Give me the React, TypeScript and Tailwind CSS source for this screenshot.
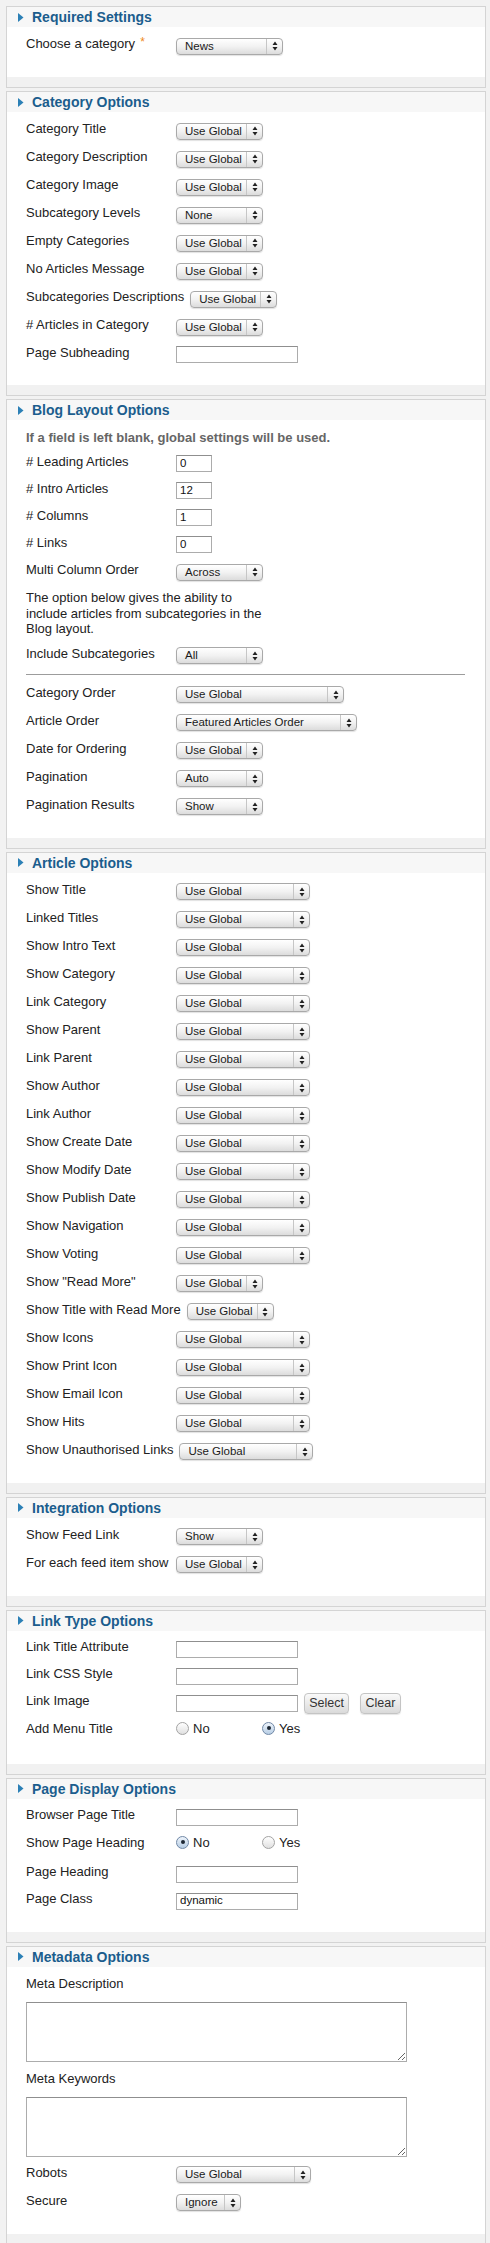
import type { ReactNode } from 'react'

const SHORT = 'w-[87px]'
const LONG = 'w-[134px]'

function Select({ value, w }: { value: string; w: string }) {
  return (
    <div
      className={`${w} h-[17px] flex items-stretch rounded-[4px] border border-[#a9a9a9] bg-linear-to-b from-white via-[#f2f2f2] to-[#dcdcdc] shadow-[0_1px_1px_rgba(0,0,0,0.12)]`}
    >
      <span className="flex-1 pl-[8px] text-[11.5px] leading-[15px] text-[#1a1a1a] whitespace-nowrap overflow-hidden">
        {value}
      </span>
      <span className="w-[16px] border-l border-[#c6c6c6] flex items-center justify-center">
        <svg width="6" height="10" viewBox="0 0 6 10">
          <path d="M0.5 4 L3 0.5 L5.5 4 Z M0.5 6 L3 9.5 L5.5 6 Z" fill="#222" />
        </svg>
      </span>
    </div>
  )
}

function TextInput({ value = '', w = 'w-[122px]' }: { value?: string; w?: string }) {
  return (
    <input
      readOnly
      defaultValue={value}
      className={`${w} h-[17px] border border-[#acacac] border-t-[#8f8f8f] bg-white px-[3px] text-[11.5px] text-[#111] outline-none`}
    />
  )
}

function Label({ children, req }: { children: ReactNode; req?: boolean }) {
  return (
    <label className="min-w-[144px] mr-[6px] mb-[4px] text-[13px] leading-[16px] text-[#222] whitespace-nowrap">
      {children}
      {req && <span className="ml-[5px] align-top text-[12px] leading-[12px] text-[#ef8a21]">*</span>}
    </label>
  )
}

function SelectRow({ label, value, w = SHORT, req }: { label: string; value: string; w?: string; req?: boolean }) {
  return (
    <div className="h-[28px] flex items-center">
      <Label req={req}>{label}</Label>
      <Select value={value} w={w} />
    </div>
  )
}

function InputRow({ label, value, w, children }: { label: string; value?: string; w?: string; children?: ReactNode }) {
  return (
    <div className="h-[27px] flex items-center">
      <Label>{label}</Label>
      <TextInput value={value} w={w} />
      {children}
    </div>
  )
}

function Radio({ label, checked }: { label: string; checked?: boolean }) {
  return (
    <span className="w-[86px] flex items-center gap-[4px] text-[13px] leading-[13px] text-[#222]">
      <span
        className={`w-[13px] h-[13px] rounded-full border flex items-center justify-center ${
          checked
            ? 'border-[#7088a6] bg-linear-to-b from-[#eef4fb] to-[#b7cde4]'
            : 'border-[#a3a3a3] bg-linear-to-b from-white to-[#e0e0e0]'
        }`}
      >
        {checked && <span className="w-[4px] h-[4px] rounded-full bg-[#1d2733]" />}
      </span>
      {label}
    </span>
  )
}

function RadioRow({ label, yes }: { label: string; yes: boolean }) {
  return (
    <div className="h-[30px] pt-[5px] flex items-start">
      <label className="min-w-[144px] mr-[6px] text-[13px] leading-[13px] text-[#222] whitespace-nowrap">{label}</label>
      <Radio label="No" checked={!yes} />
      <Radio label="Yes" checked={yes} />
    </div>
  )
}

function Button({ children, w }: { children: ReactNode; w: string }) {
  return (
    <button
      className={`${w} h-[21px] rounded-[4px] border border-[#c4c4c4] bg-linear-to-b from-[#fafafa] to-[#dadada] text-[12.5px] text-[#333] shadow-[0_1px_1px_rgba(0,0,0,0.1)]`}
    >
      {children}
    </button>
  )
}

function Panel({ title, children }: { title: string; children: ReactNode }) {
  return (
    <section className="ml-[6px] w-[480px] mb-[3px] border border-[#d4d4d4] bg-[#f1f1f1]">
      <div className="h-[20px] bg-[#f7f7f7] flex items-center">
        <svg className="ml-[11px]" width="6" height="9" viewBox="0 0 6 9">
          <path d="M0 0 L5.5 4.5 L0 9 Z" fill="#2c80b6" />
        </svg>
        <h3 className="ml-[8px] text-[14px] leading-[20px] font-bold text-[#1b5d8d]">{title}</h3>
      </div>
      <div className="bg-white pl-[19px] pt-[5px] pb-[17px]">{children}</div>
      <div className="h-[10px]" />
    </section>
  )
}

const CATEGORY: [string, string][] = [
  ['Category Title', 'Use Global'],
  ['Category Description', 'Use Global'],
  ['Category Image', 'Use Global'],
  ['Subcategory Levels', 'None'],
  ['Empty Categories', 'Use Global'],
  ['No Articles Message', 'Use Global'],
  ['Subcategories Descriptions', 'Use Global'],
  ['# Articles in Category', 'Use Global'],
]

const ARTICLE: [string, string][] = [
  ['Show Title', LONG],
  ['Linked Titles', LONG],
  ['Show Intro Text', LONG],
  ['Show Category', LONG],
  ['Link Category', LONG],
  ['Show Parent', LONG],
  ['Link Parent', LONG],
  ['Show Author', LONG],
  ['Link Author', LONG],
  ['Show Create Date', LONG],
  ['Show Modify Date', LONG],
  ['Show Publish Date', LONG],
  ['Show Navigation', LONG],
  ['Show Voting', LONG],
  ['Show "Read More"', SHORT],
  ['Show Title with Read More', SHORT],
  ['Show Icons', LONG],
  ['Show Print Icon', LONG],
  ['Show Email Icon', LONG],
  ['Show Hits', LONG],
  ['Show Unauthorised Links', LONG],
]

export default function App() {
  return (
    <div className="h-[2243px] overflow-hidden bg-[#f2f2f2] pt-[6px] font-['Liberation_Sans',Arial,sans-serif]">
      <Panel title="Required Settings">
        <SelectRow label="Choose a category" value="News" w="w-[107px]" req />
      </Panel>

      <Panel title="Category Options">
        {CATEGORY.map(([l, v]) => (
          <SelectRow key={l} label={l} value={v} />
        ))}
        <InputRow label="Page Subheading" />
      </Panel>

      <Panel title="Blog Layout Options">
        <div className="h-[25px] flex items-center text-[13px] font-bold text-[#666]">
          If a field is left blank, global settings will be used.
        </div>
        <InputRow label="# Leading Articles" value="0" w="w-[36px]" />
        <InputRow label="# Intro Articles" value="12" w="w-[36px]" />
        <InputRow label="# Columns" value="1" w="w-[36px]" />
        <InputRow label="# Links" value="0" w="w-[36px]" />
        <SelectRow label="Multi Column Order" value="Across" />
        <p className="mt-[4px] mb-[5px] text-[13px] leading-[15.5px] text-[#222]">
          The option below gives the ability to
          <br />
          include articles from subcategories in the
          <br />
          Blog layout.
        </p>
        <SelectRow label="Include Subcategories" value="All" />
        <div className="mt-[4px] mb-[6px] w-[439px] border-t border-[#9c9c9c]" />
        <SelectRow label="Category Order" value="Use Global" w="w-[168px]" />
        <SelectRow label="Article Order" value="Featured Articles Order" w="w-[181px]" />
        <SelectRow label="Date for Ordering" value="Use Global" />
        <SelectRow label="Pagination" value="Auto" />
        <SelectRow label="Pagination Results" value="Show" />
      </Panel>

      <Panel title="Article Options">
        {ARTICLE.map(([l, w]) => (
          <SelectRow key={l} label={l} value="Use Global" w={w} />
        ))}
      </Panel>

      <Panel title="Integration Options">
        <SelectRow label="Show Feed Link" value="Show" />
        <SelectRow label="For each feed item show" value="Use Global" />
      </Panel>

      <Panel title="Link Type Options">
        <InputRow label="Link Title Attribute" />
        <InputRow label="Link CSS Style" />
        <InputRow label="Link Image">
          <div className="ml-[6px] flex gap-[11px]">
            <Button w="w-[45px]">Select</Button>
            <Button w="w-[41px]">Clear</Button>
          </div>
        </InputRow>
        <RadioRow label="Add Menu Title" yes />
      </Panel>

      <Panel title="Page Display Options">
        <InputRow label="Browser Page Title" />
        <RadioRow label="Show Page Heading" yes={false} />
        <InputRow label="Page Heading" />
        <InputRow label="Page Class" value="dynamic" />
      </Panel>

      <Panel title="Metadata Options">
        <div className="h-[24px] flex items-center text-[13px] text-[#222]">Meta Description</div>
        <textarea readOnly className="mt-[6px] mb-[5px] block w-[381px] h-[60px] border border-[#acacac] border-t-[#8f8f8f] bg-white outline-none" />
        <div className="h-[24px] flex items-center text-[13px] text-[#222]">Meta Keywords</div>
        <textarea readOnly className="mt-[6px] mb-[4px] block w-[381px] h-[60px] border border-[#acacac] border-t-[#8f8f8f] bg-white outline-none" />
        <SelectRow label="Robots" value="Use Global" w="w-[135px]" />
        <SelectRow label="Secure" value="Ignore" w="w-[65px]" />
      </Panel>
    </div>
  )
}
